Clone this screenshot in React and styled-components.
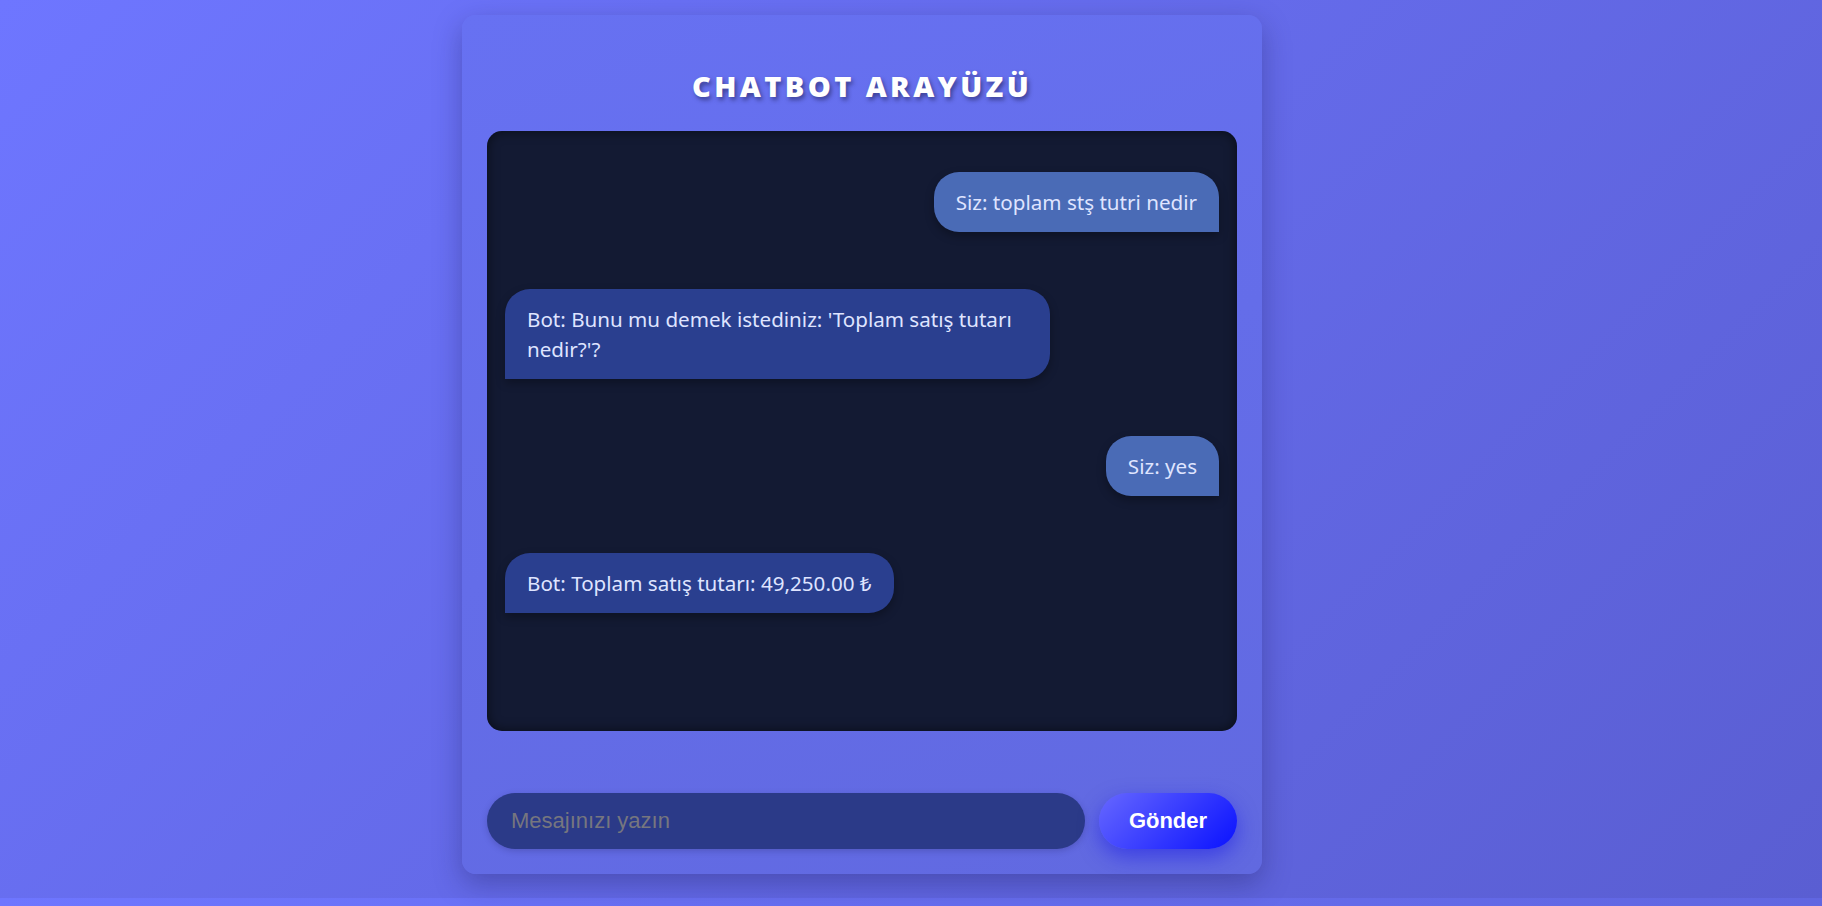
import React, { useState } from 'react';
import styled, { createGlobalStyle } from 'styled-components';

const GlobalStyle = createGlobalStyle`
  html, body {
    margin: 0;
    padding: 0;
  }
  body {
    min-height: 100vh;
    background: linear-gradient(135deg, #6e76ff 0%, #5a5ed2 100%);
    background-size: 100% 898px;
    font-family: "Noto Sans", "Open Sans", sans-serif;
  }
`;

const messages = [
  { from: 'user', text: 'Siz: toplam stş tutri nedir' },
  { from: 'bot', text: "Bot: Bunu mu demek istediniz: 'Toplam satış tutarı nedir?'?" },
  { from: 'user', text: 'Siz: yes' },
  { from: 'bot', text: 'Bot: Toplam satış tutarı: 49,250.00 ₺' },
];

function App() {
  const [value, setValue] = useState('');

  return (
    <>
      <GlobalStyle />
      <Page>
        <Card>
          <Title>Chatbot Arayüzü</Title>
          <ChatBox>
            {messages.map((m, i) => (
              <Row key={i} $user={m.from === 'user'}>
                <Bubble $user={m.from === 'user'}>{m.text}</Bubble>
              </Row>
            ))}
          </ChatBox>
          <InputRow>
            <MessageInput
              placeholder="Mesajınızı yazın"
              value={value}
              onChange={(e) => setValue(e.target.value)}
            />
            <SendButton>Gönder</SendButton>
          </InputRow>
        </Card>
      </Page>
    </>
  );
}

const Page = styled.div`
  display: flex;
  justify-content: center;
  padding: 15px 98px 25px 0;
`;

const Card = styled.div`
  width: 800px;
  box-sizing: border-box;
  padding: 0 25px 25px;
  border-radius: 14px;
  background: linear-gradient(160deg, #6771f2 0%, #6169e0 100%);
  box-shadow: 0 10px 28px rgba(30, 30, 90, 0.35);
  display: flex;
  flex-direction: column;
`;

const Title = styled.h1`
  margin: 52px 0 26px;
  text-align: center;
  text-transform: uppercase;
  font-family: "Open Sans", "Noto Sans", sans-serif;
  font-weight: 800;
  font-size: 29px;
  line-height: 38px;
  letter-spacing: 3.4px;
  color: #ffffff;
  text-shadow: 2px 3px 4px rgba(30, 30, 80, 0.55);
`;

const ChatBox = styled.div`
  height: 600px;
  box-sizing: border-box;
  padding: 41px 18px 20px;
  border-radius: 15px;
  background: #131a33;
  box-shadow: inset 0 0 12px rgba(0, 0, 0, 0.55);
  display: flex;
  flex-direction: column;
  gap: 57px;
  overflow: hidden;
`;

const Row = styled.div`
  display: flex;
  justify-content: ${(p) => (p.$user ? 'flex-end' : 'flex-start')};
`;

const Bubble = styled.div`
  max-width: 501px;
  padding: 15px 22px;
  font-family: "Noto Sans", sans-serif;
  font-size: 20.6px;
  line-height: 30px;
  color: #dfe4ff;
  background: ${(p) => (p.$user ? '#4a6bb6' : '#2a3f8f')};
  border-radius: ${(p) => (p.$user ? '25px 25px 0 25px' : '25px 25px 25px 0')};
  box-shadow: 0 4px 10px rgba(0, 0, 0, 0.3);
`;

const InputRow = styled.div`
  display: flex;
  gap: 14px;
  margin-top: 62px;
`;

const MessageInput = styled.input`
  flex: 1;
  height: 56px;
  box-sizing: border-box;
  padding: 0 24px;
  border: none;
  outline: none;
  border-radius: 28px;
  background: #2b3a88;
  color: #e0e4ff;
  font-family: "Liberation Sans", Arial, sans-serif;
  font-size: 22px;
  box-shadow: 0 2px 6px rgba(30, 30, 90, 0.25);

  &::placeholder {
    color: #76767f;
  }
`;

const SendButton = styled.button`
  width: 138px;
  height: 56px;
  border: none;
  border-radius: 28px;
  background: linear-gradient(135deg, #6667ff 0%, #0a12ff 100%);
  color: #ffffff;
  font-family: "Liberation Sans", Arial, sans-serif;
  font-weight: 700;
  font-size: 22px;
  cursor: pointer;
  box-shadow: 0 8px 20px rgba(30, 30, 230, 0.55);
`;

export default App;
